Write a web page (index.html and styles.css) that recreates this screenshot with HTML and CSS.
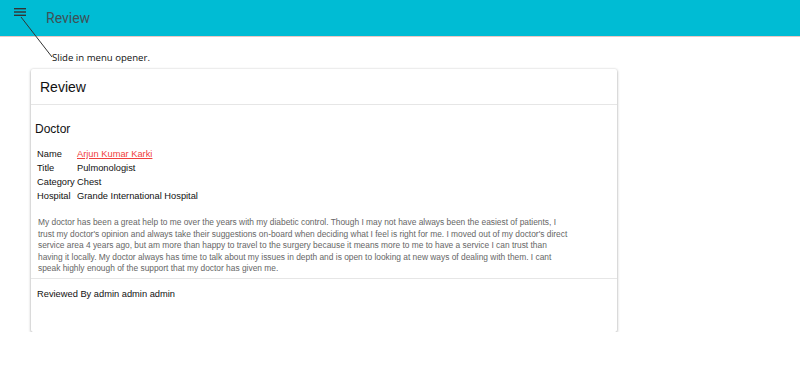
FILE: index.html
```html
<!DOCTYPE html>
<html lang="en">
<head>
  <meta charset="UTF-8">
  <title>Review</title>
  <link rel="stylesheet" href="styles.css">
</head>
<body>
  <!-- Top bar -->
  <header class="topbar">
    <button class="menu-btn" aria-label="Menu">
      <svg width="12" height="8" viewBox="0 0 12 8">
        <rect x="0" y="0" width="12" height="1.4" fill="#333"/>
        <rect x="0" y="3.3" width="12" height="1.4" fill="#333"/>
        <rect x="0" y="6.6" width="12" height="1.4" fill="#333"/>
      </svg>
    </button>
    <span class="topbar-title">Review</span>
  </header>

  <!-- Annotation -->
  <svg class="callout-line" width="60" height="60" viewBox="0 0 60 60">
    <line x1="21" y1="17" x2="52" y2="57" stroke="#333" stroke-width="1"/>
  </svg>
  <span class="callout-text">Slide in menu opener.</span>

  <!-- Content -->
  <main class="content">
    <div class="card">
      <div class="card-header">Review</div>
      <div class="card-body">
        <h3 class="section-title">Doctor</h3>
        <div class="info">
          <span>Name</span><a href="#">Arjun Kumar Karki</a>
          <span>Title</span><span>Pulmonologist</span>
          <span>Category</span><span>Chest</span>
          <span>Hospital</span><span>Grande International Hospital</span>
        </div>
        <p class="review-text">My doctor has been a great help to me over the years with my diabetic control. Though I may not have always been the easiest of patients, I<br>trust my doctor's opinion and always take their suggestions on-board when deciding what I feel is right for me. I moved out of my doctor's direct<br>service area 4 years ago, but am more than happy to travel to the surgery because it means more to me to have a service I can trust than<br>having it locally. My doctor always has time to talk about my issues in depth and is open to looking at new ways of dealing with them. I cant<br>speak highly enough of the support that my doctor has given me.</p>
      </div>
      <div class="card-footer">Reviewed By admin admin admin</div>
    </div>
  </main>
</body>
</html>
```

FILE: styles.css
```css
body {
  margin: 0;
  font-family: "Liberation Sans", Arial, sans-serif;
  color: #222;
  background: #fff;
}

/* Top bar */
.topbar {
  height: 37px;
  background-color: #00bcd4;
  border-bottom: 1px solid #e9c9c4;
  display: flex;
  align-items: center;
  box-sizing: border-box;
}

.menu-btn {
  border: none;
  background: none;
  padding: 0;
  margin: 8px 0 0 14px;
  align-self: flex-start;
  height: 8px;
  line-height: 0;
}

.topbar-title {
  margin-left: 20px;
  font-family: Roboto, "Liberation Sans", sans-serif;
  font-size: 14px;
  color: #3f5157;
}

/* Annotation */
.callout-line {
  position: absolute;
  left: 0;
  top: 0;
}

.callout-text {
  position: absolute;
  left: 52px;
  top: 51px;
  font-family: "Open Sans", sans-serif;
  font-size: 9.6px;
  color: #111;
}

/* Card */
.content {
  padding: 32px 0 0 31px;
}

.card {
  width: 586px;
  height: 263px;
  box-sizing: border-box;
  background: #fff;
  box-shadow: 0 1px 3px rgba(0, 0, 0, 0.35), 0 0 2px rgba(0, 0, 0, 0.1);
  border-radius: 2px;
}

.card-header {
  height: 36px;
  box-sizing: border-box;
  padding: 10px 9px 0;
  font-size: 14px;
  color: #111;
  border-bottom: 1px solid #e6e6e6;
}

.card-body {
  padding: 16px 4px 3px;
  border-bottom: 1px solid #e6e6e6;
}

.section-title {
  margin: 0;
  font-size: 12px;
  font-weight: normal;
  line-height: 16px;
  color: #111;
}

.info {
  display: grid;
  grid-template-columns: 40px 1fr;
  margin: 10px 0 0 2px;
  font-size: 9.3px;
  line-height: 14px;
  color: #111;
}

.info a {
  color: #f0413d;
  justify-self: start;
}

.review-text {
  margin: 14px 0 0 3px;
  font-size: 8.4px;
  line-height: 11.5px;
  color: #666;
  white-space: nowrap;
}

.card-footer {
  padding: 8px 6px 0;
  font-size: 9.3px;
  line-height: 14px;
  color: #111;
}
```
